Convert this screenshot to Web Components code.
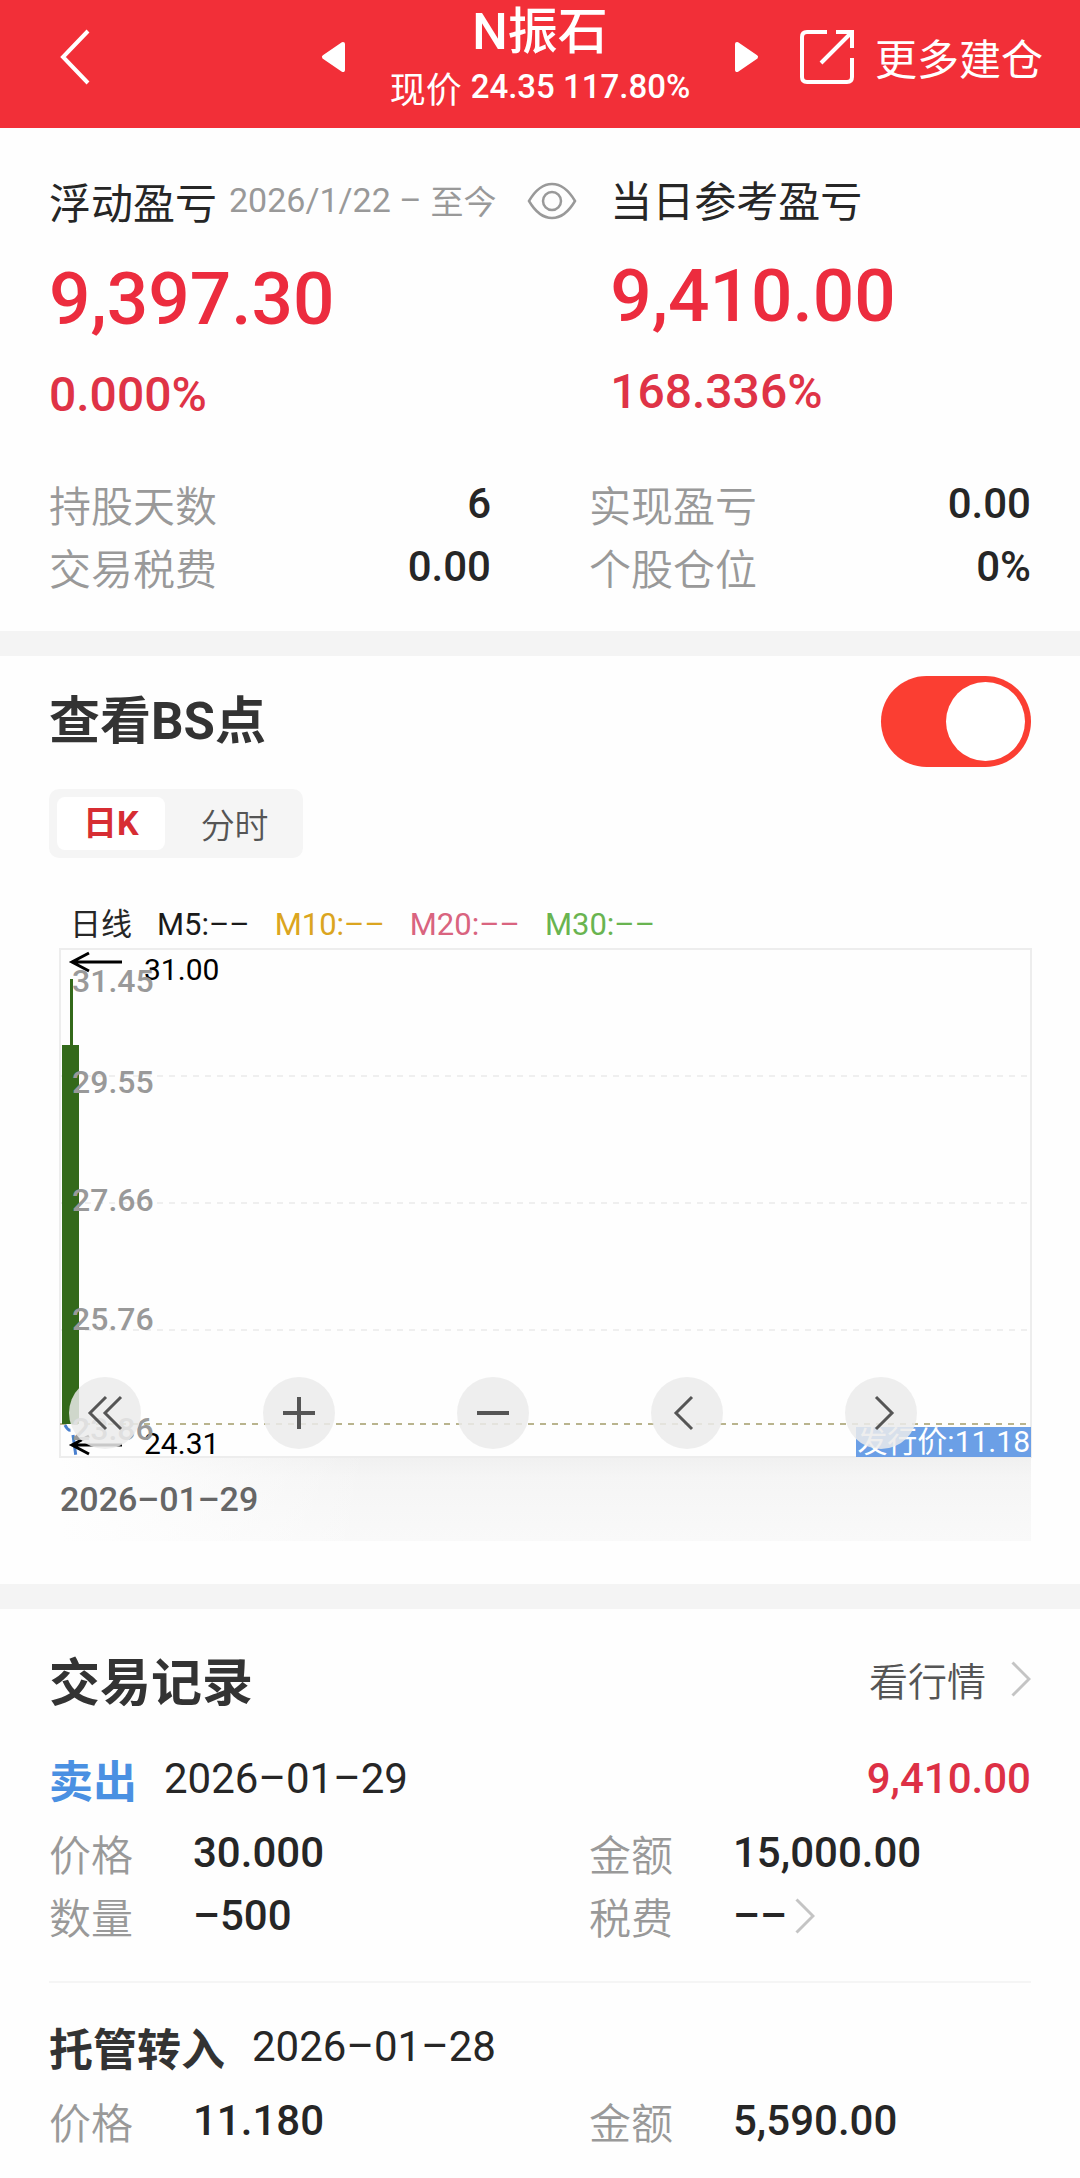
<!DOCTYPE html>
<html lang="zh-CN">
<head>
<meta charset="utf-8">
<meta name="viewport" content="width=device-width, initial-scale=1">
<title>N振石</title>
<style>
html{--num:Roboto,"Noto Sans CJK SC",sans-serif;--cjk:"Noto Sans CJK SC",sans-serif;--red:#ec2c3e;--ink:#262626;--muted:#999}
body{margin:0;background:#fefefe;color:#262626;font-family:Roboto,"Noto Sans CJK SC",sans-serif}
</style>
</head>
<body>
<position-page></position-page>
<script>
const define = (name, html, setup) => customElements.define(name, class extends HTMLElement {
  constructor() {
    super();
    const t = document.createElement('template');
    t.innerHTML = html;
    this.attachShadow({ mode: 'open' }).appendChild(t.content.cloneNode(true));
  }
  connectedCallback() { if (setup) setup(this, this.shadowRoot); }
});

/* light right-pointing chevron used by links */
define('chevron-icon', `
<style>:host{display:inline-flex}svg{display:block}</style>
<svg width="20" height="36" viewBox="0 0 20 36" fill="none" stroke="#c4c4c4" stroke-width="3"><path d="M1.5 1.5L18 18L1.5 34.5"/></svg>`);

define('stock-header', `
<style>
:host{display:grid;grid-template-columns:1fr auto 1fr;align-items:center;background:#f22f38;color:#fff;padding:0 37px 14px}
button,a{background:none;border:0;padding:0;color:inherit;font:inherit;text-decoration:none;display:flex;align-items:center}
svg{display:block}
.back{padding:10px 22px;justify-self:start}
.nav{display:flex;align-items:center;gap:44px}
.title{text-align:center;padding-top:4px}
h1{margin:0;font:500 50px/56px var(--num)}
p{margin:0;display:flex;align-items:center;gap:9px;font:400 36px/54px var(--cjk);white-space:nowrap}
p span{font:500 33px/54px var(--num)}
.more{justify-self:end;gap:20px;font:400 42px/60px var(--cjk);white-space:nowrap}
</style>
<button class="back" aria-label="返回"><svg width="32" height="56" viewBox="0 0 32 56" fill="none" stroke="#fff" stroke-width="4"><path d="M29 2L4 28L29 54"/></svg></button>
<div class="nav">
<button aria-label="上一只"><svg width="25" height="32" viewBox="0 0 25 32"><path d="M22 3L3 16L22 29Z" fill="#fff" stroke="#fff" stroke-width="4" stroke-linejoin="round"/></svg></button>
<div class="title"><h1>N振石</h1><p>现价 <span>24.35 117.80%</span></p></div>
<button aria-label="下一只"><svg width="25" height="32" viewBox="0 0 25 32"><path d="M3 3L22 16L3 29Z" fill="#fff" stroke="#fff" stroke-width="4" stroke-linejoin="round"/></svg></button>
</div>
<a class="more" href="#more"><svg width="56" height="56" viewBox="0 0 56 56" fill="none" stroke="#fff" stroke-width="4"><path d="M28 3H8Q3 3 3 8V48Q3 53 8 53H48Q53 53 53 48V29M37 3H53V19M53 3L22 34"/></svg>更多建仓</a>`);

define('profit-block', `
<style>
:host{display:flex;flex-direction:column;gap:18px;color:var(--red);font-family:var(--num);font-weight:500}
.big{font-size:73px;line-height:98px}
.pct{font-size:48px;line-height:58px;color:#df3346}
</style>
<slot></slot><div class="big"></div><div class="pct"></div>`, (el, r) => {
  r.querySelector('.big').textContent = el.getAttribute('amount');
  r.querySelector('.pct').textContent = el.getAttribute('percent');
});

define('stat-row', `
<style>
:host{display:flex;align-items:center;justify-content:space-between;line-height:63px}
.k{font:350 42px/63px var(--cjk);color:var(--muted)}
.v{font:500 42px/63px var(--num);color:var(--ink)}
</style>
<span class="k"></span><span class="v"></span>`, (el, r) => {
  r.querySelector('.k').textContent = el.getAttribute('label');
  r.querySelector('.v').textContent = el.getAttribute('value');
});

define('profit-summary', `
<style>
:host{display:block;padding:41px 49px 33px}
.top{display:grid;grid-template-columns:4fr 3fr}
.head{display:flex;align-items:center;font:400 42px/60px var(--cjk);color:var(--ink);white-space:nowrap}
.range{line-height:63px}
.date{display:flex;align-items:center;gap:9px;font:400 33px/63px var(--cjk);color:var(--muted);margin-left:12px}
.date span{font:400 34px/63px var(--num)}
button{background:none;border:0;padding:0;margin-left:30px}
svg{display:block}
.stats{display:grid;grid-template-columns:1fr 1fr;column-gap:98px;margin-top:48px}
</style>
<div class="top">
<profit-block amount="9,397.30" percent="0.000%"><div class="head range">浮动盈亏<div class="date"><span>2026/1/22 –</span>至今</div><button aria-label="隐藏金额"><svg width="50" height="38" viewBox="0 0 50 38" fill="none" stroke="#999" stroke-width="2.5"><path d="M2 19Q12 2 25 2T48 19Q38 36 25 36T2 19Z"/><circle cx="25" cy="19" r="9"/></svg></button></div></profit-block>
<profit-block amount="9,410.00" percent="168.336%"><div class="head">当日参考盈亏</div></profit-block>
</div>
<div class="stats">
<stat-row label="持股天数" value="6"></stat-row><stat-row label="实现盈亏" value="0.00"></stat-row>
<stat-row label="交易税费" value="0.00"></stat-row><stat-row label="个股仓位" value="0%"></stat-row>
</div>`);

define('section-gap', `<style>:host{display:block;height:25px;background:#f4f4f4}</style>`);

define('toggle-switch', `
<style>
:host{display:flex;align-items:center;justify-content:space-between}
label{font:700 51px/70px var(--num);color:#333}
input{appearance:none;margin:0;box-sizing:border-box;width:150px;height:91px;border-radius:46px;background:#ccc;padding:6px;display:flex;cursor:pointer}
input::before{content:"";width:79px;height:79px;border-radius:50%;background:#fff}
input:checked{background:#fb3e32;justify-content:flex-end}
</style>
<label for="sw"><slot></slot></label><input id="sw" type="checkbox" checked>`);

define('period-tabs', `
<style>
:host{display:inline-flex;box-sizing:border-box;padding:8px;border-radius:10px;background:#f5f5f5;gap:10px}
button{border:0;background:none;border-radius:8px;padding:0 26px;font:350 34px/53px var(--cjk);color:#555}
.on{background:#fff;color:#d72d33;font:700 34px/53px var(--num)}
</style>
<button class="on" aria-pressed="true">日K</button><button aria-pressed="false">分时</button>`);

define('k-chart', `
<style>
:host{display:block;margin-left:11px}
.legend{display:flex;gap:25px;padding-left:10px;font:400 31px/40px var(--num);margin-bottom:4px;white-space:nowrap}
.plot{position:relative}
svg{display:block}
.main{font-family:var(--num);overflow:visible}
.axis{font-size:32px;font-weight:500;fill:#999}
.mark{font-size:30px;fill:#000}
.tag{position:absolute;right:0;bottom:0;background:#6b9fe6;color:#fff;font:400 30px/30px var(--num);padding:0 1px;white-space:nowrap}
.tools{position:absolute;left:9px;bottom:8px;display:flex;gap:122px}
button{width:72px;height:72px;border:0;border-radius:50%;padding:0;background:rgba(235,235,235,.85);display:grid;place-items:center}
.foot{height:84px;font:500 34px/84px var(--num);color:#666;background:linear-gradient(90deg,#fefefe 0,#fefefe00 32%),linear-gradient(#f0f0f0 0,#f5f5f5 24%,#f9f9f9 100%)}
</style>
<div class="legend"><span>日线</span><span style="color:#1a1a1a">M5:––</span><span style="color:#dba520">M10:––</span><span style="color:#d9647f">M20:––</span><span style="color:#69b450">M30:––</span></div>
<div class="plot">
<svg class="main" width="100%" height="508">
<g stroke="#efefef" stroke-width="2" stroke-dasharray="6 6"><line x1="1" x2="100%" y1="127" y2="127"/><line x1="1" x2="100%" y1="254" y2="254"/><line x1="1" x2="100%" y1="381" y2="381"/></g>
<rect width="100%" height="508" fill="none" stroke="#ededed" stroke-width="2"/>
<line x1="0" x2="100%" y1="475" y2="475" stroke="#b9b48e" stroke-width="2" stroke-dasharray="6 6"/>
<rect x="10" y="30" width="3" height="66" fill="#33691a"/><rect x="2" y="96" width="17" height="379" fill="#33691a"/>
<path d="M5 476Q9 484 13 480M13 486L16 508" fill="none" stroke="#4a80cf" stroke-width="3" stroke-dasharray="8 4"/>
<g fill="none" stroke="#000" stroke-width="3"><path d="M62 13H12M29 4L12 13L29 22"/><path d="M62 496H12M29 487L12 496L29 505"/></g>
<g class="mark"><text x="84" y="31">31.00</text><text x="84" y="505">24.31</text></g>
<g class="axis"><text x="12" y="43">31.45</text><text x="12" y="144">29.55</text><text x="12" y="262">27.66</text><text x="12" y="381">25.76</text><text x="12" y="491">23.86</text></g>
</svg>
<div class="tag">发行价:11.18</div>
<div class="tools">
<button aria-label="最早"><svg width="36" height="36" viewBox="0 0 36 36" fill="none" stroke="#555" stroke-width="3"><path d="M19 2L3 18L19 34M34 2L18 18L34 34"/></svg></button>
<button aria-label="放大"><svg width="36" height="36" viewBox="0 0 36 36" stroke="#555" stroke-width="4"><path d="M2 18H34M18 2V34"/></svg></button>
<button aria-label="缩小"><svg width="36" height="36" viewBox="0 0 36 36" stroke="#555" stroke-width="4"><path d="M2 18H34"/></svg></button>
<button aria-label="向左"><svg width="36" height="36" viewBox="0 0 36 36" fill="none" stroke="#555" stroke-width="3"><path d="M23 2L7 18L23 34"/></svg></button>
<button aria-label="向右"><svg width="36" height="36" viewBox="0 0 36 36" fill="none" stroke="#555" stroke-width="3"><path d="M13 2L29 18L13 34"/></svg></button>
</div>
</div>
<div class="foot">2026–01–29</div>`);

define('bs-panel', `
<style>:host{display:block;padding:20px 49px 43px}period-tabs{margin:22px 0 47px}.t{display:flex}</style>
<toggle-switch>查看BS点</toggle-switch><div class="t"><period-tabs></period-tabs></div><k-chart></k-chart>`);

define('record-field', `
<style>
:host{display:flex;align-items:center;line-height:63px}
.k{flex:0 0 144px;font:350 42px/63px var(--cjk);color:var(--muted)}
.v{font:500 42px/63px var(--num);color:var(--ink)}
</style>
<span class="k"></span><span class="v"></span><slot></slot>`, (el, r) => {
  r.querySelector('.k').textContent = el.getAttribute('label');
  r.querySelector('.v').textContent = el.getAttribute('value');
});

define('trade-record', `
<style>
:host{display:block}
.head{display:flex;align-items:center;margin-bottom:11px;font:500 42px/62px var(--num)}
.kind{font:700 44px/62px var(--cjk);color:#333;margin-right:27px}
.date{font-weight:400;color:var(--ink)}
.sum{margin-left:auto;color:#dd3045}
:host([sell]) .kind{color:#4a90e2}
.fields{display:grid;grid-template-columns:1fr 1fr;column-gap:98px}
</style>
<div class="head"><span class="kind"></span><span class="date"></span><span class="sum"></span></div>
<div class="fields"><slot></slot></div>`, (el, r) => {
  for (const k of ['kind', 'date', 'sum']) r.querySelector('.' + k).textContent = el.getAttribute(k) || '';
});

define('trade-list', `
<style>
:host{display:block;padding:36px 49px 20px}
.bar{display:flex;align-items:center;justify-content:space-between;margin-bottom:35px}
h2{margin:0;font:700 51px/68px var(--cjk);color:#333}
a{display:flex;align-items:center;gap:25px;font:350 39px/60px var(--cjk);color:#555;text-decoration:none}
a.fee{margin-left:8px}
hr{border:0;height:2px;background:#f5f5f5;margin:34px 0 33px}
</style>
<div class="bar"><h2>交易记录</h2><a href="#quote">看行情<chevron-icon></chevron-icon></a></div>
<trade-record sell kind="卖出" date="2026–01–29" sum="9,410.00">
<record-field label="价格" value="30.000"></record-field><record-field label="金额" value="15,000.00"></record-field>
<record-field label="数量" value="–500"></record-field><record-field label="税费" value="––"><a class="fee" href="#fee" aria-label="税费明细"><chevron-icon></chevron-icon></a></record-field>
</trade-record>
<hr>
<trade-record kind="托管转入" date="2026–01–28">
<record-field label="价格" value="11.180"></record-field><record-field label="金额" value="5,590.00"></record-field>
</trade-record>`);

define('position-page', `
<style>:host{display:block}</style>
<stock-header></stock-header>
<profit-summary></profit-summary>
<section-gap></section-gap>
<bs-panel></bs-panel>
<section-gap></section-gap>
<trade-list></trade-list>`);
</script>
</body>
</html>
